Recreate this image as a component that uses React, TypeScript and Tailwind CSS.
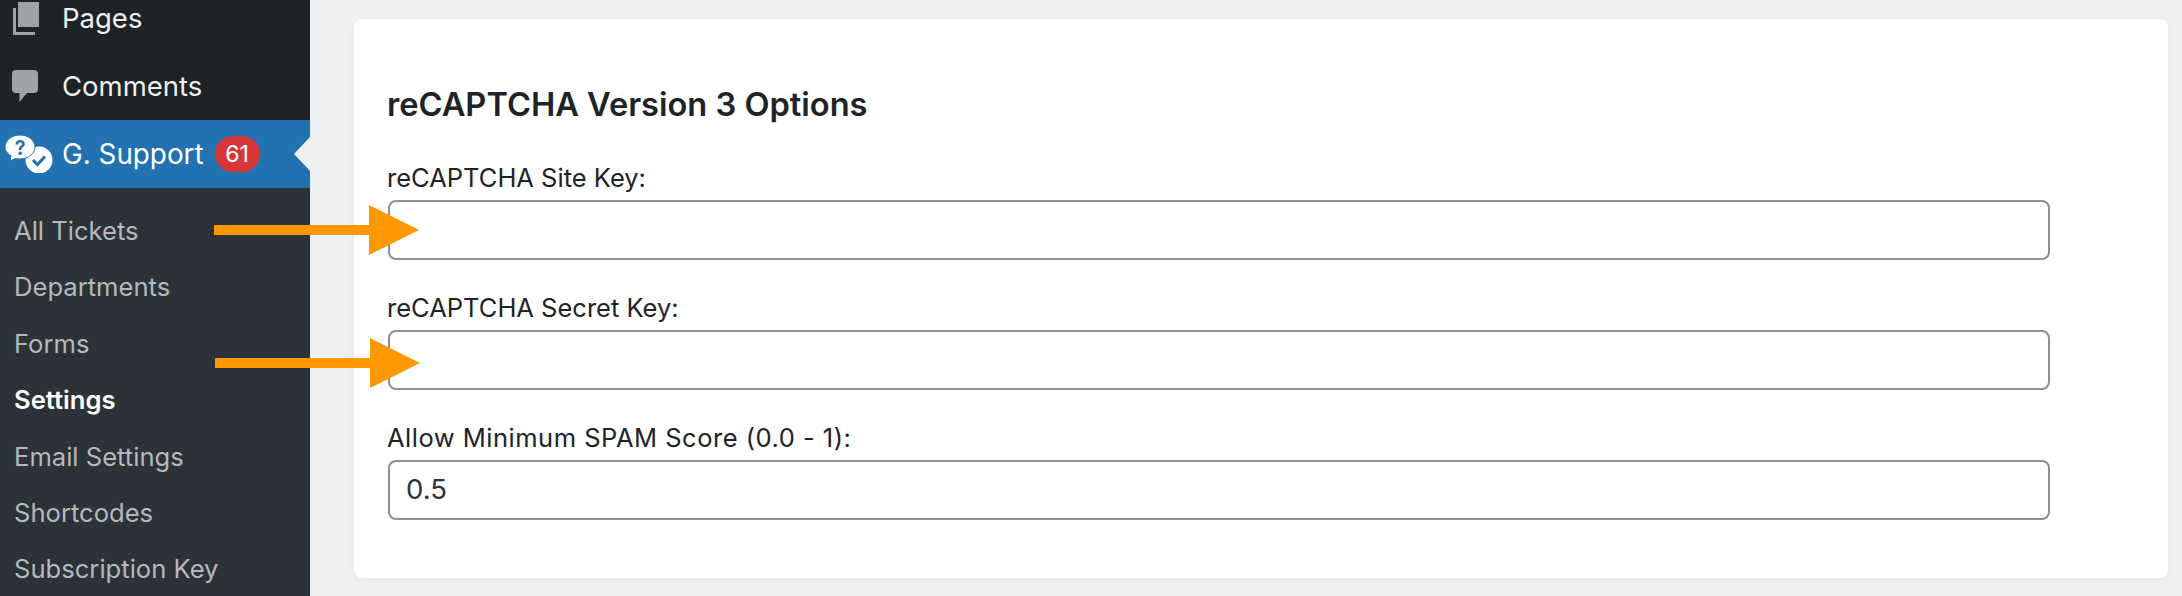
import React from "react";

const subItems = [
  { label: "All Tickets" },
  { label: "Departments" },
  { label: "Forms" },
  { label: "Settings", active: true },
  { label: "Email Settings" },
  { label: "Shortcodes" },
  { label: "Subscription Key" },
];

const fields = [
  { label: "reCAPTCHA Site Key:", value: "", labelClass: "" },
  { label: "reCAPTCHA Secret Key:", value: "", labelClass: "" },
  { label: "Allow Minimum SPAM Score (0.0 - 1):", value: "0.5", labelClass: "tracking-[0.5px]" },
];

const PagesIcon = () => (
  <svg width="28" height="36" viewBox="0 0 28 36" fill="#9ea3a8">
    <path d="M7 2h21v25H7z" />
    <path d="M2 8h3v24h19v3H2z" />
  </svg>
);

const CommentsIcon = () => (
  <svg width="28" height="34" viewBox="0 0 28 34" fill="#9ea3a8">
    <path d="M5 1h18a4 4 0 0 1 4 4v15a4 4 0 0 1-4 4h-7l-7.500 9v-9H5a4 4 0 0 1-4-4V5a4 4 0 0 1 4-4z" />
  </svg>
);

const SupportIcon = () => (
  <svg width="48" height="38" viewBox="0 0 48 38">
    <circle cx="34" cy="25" r="13.500" fill="#fff" />
    <path d="M28 25l4.500 4.500L40 21.500" fill="none" stroke="#2271b1" strokeWidth="3" />
    <path
      d="M15 0c8.300 0 15 5.400 15 12s-6.700 12-15 12c-1.500 0-3-.2-4.400-.5L5 26l1-5.200C2.300 18.600 0 15.500 0 12 0 5.400 6.700 0 15 0z"
      fill="#fff"
      stroke="#2271b1"
      strokeWidth="1"
    />
    <path
      d="M10.500 9.500c0-2.800 2-4.500 4.700-4.500 2.600 0 4.600 1.500 4.600 3.900 0 3.200-3.500 3.200-3.500 6h-2.700c0-4 3.400-4 3.400-6 0-1-.8-1.600-1.800-1.600-1.200 0-2 .8-2 2.200z"
      fill="#2271b1"
    />
    <circle cx="15.200" cy="18.300" r="1.800" fill="#2271b1" />
  </svg>
);

// the two orange annotation arrows drawn over the screenshot
const Arrow = ({ className }: { className: string }) => (
  <svg className={className} width="205" height="50" viewBox="0 0 205 50" fill="#ff9800">
    <path d="M0 20h155V0l50 25-50 25V30H0z" />
  </svg>
);

export default function App() {
  return (
    <div className="relative flex h-[596px] w-[2182px] overflow-hidden bg-[#eef0f2] font-['Inter',sans-serif]">
      <aside className="flex w-[310px] shrink-0 flex-col bg-[#2c3338]">
        <div className="mt-[-16px] shrink-0 bg-[#1d2327]">
          <div className="flex h-[68px] items-center gap-[23px] pl-[11px] text-[27.500px] text-[#f0f0f1]">
            <PagesIcon />
            <span className="pt-[2px]">Pages</span>
          </div>
          <div className="flex h-[68px] items-center gap-[23px] pl-[11px] text-[27.500px] text-[#f0f0f1]">
            <CommentsIcon />
            <span className="pt-[2px]">Comments</span>
          </div>
        </div>
        <div className="relative flex h-[68px] shrink-0 items-center bg-[#2271b1] pl-[5px] text-[27.800px] text-white">
          <SupportIcon />
          <span className="ml-[9px] pt-[2px]">G. Support</span>
          <span className="ml-[11px] flex h-[36px] w-[45px] items-center justify-center rounded-full bg-[#d63638] text-[23px]">
            61
          </span>
          <div className="absolute right-0 top-[17px] h-0 w-0 border-y-[17px] border-r-[16px] border-y-transparent border-r-[#eef0f2]" />
        </div>
        <ul className="shrink-0 pt-[15px]">
          {subItems.map((item) => (
            <li
              key={item.label}
              className={
                item.active
                  ? "flex h-[56.400px] items-center pl-[14px] text-[25.600px] font-semibold text-white"
                  : "flex h-[56.400px] items-center pl-[14px] text-[25.600px] text-[#b4b9be]"
              }
            >
              {item.label}
            </li>
          ))}
        </ul>
      </aside>

      <main className="flex-1 pl-[44px] pr-[14px] pt-[19px]">
        <div className="h-[559px] rounded-[8px] bg-white pl-[34px] pr-[118px] pt-[65px] shadow-[0_2px_8px_rgba(0,0,0,0.04)]">
          <h2 className="-ml-px text-[32.600px] font-semibold leading-[40px] text-[#1d2327]">
            reCAPTCHA Version 3 Options
          </h2>
          <div className="mt-[36px] flex flex-col gap-[30px]">
            {fields.map((field) => (
              <div key={field.label}>
                <label className={`-ml-px block pt-px text-[25.500px] leading-[34px] text-[#1d2327] ${field.labelClass}`}>
                  {field.label}
                </label>
                <div className="mt-[5px] flex h-[60px] items-center rounded-[8px] border-2 border-[#8c8f94] bg-white pl-[16px] text-[27.500px] text-[#2c3338]">
                  {field.value}
                </div>
              </div>
            ))}
          </div>
        </div>
      </main>

      <Arrow className="absolute left-[214px] top-[205px]" />
      <Arrow className="absolute left-[215px] top-[338px]" />
    </div>
  );
}
